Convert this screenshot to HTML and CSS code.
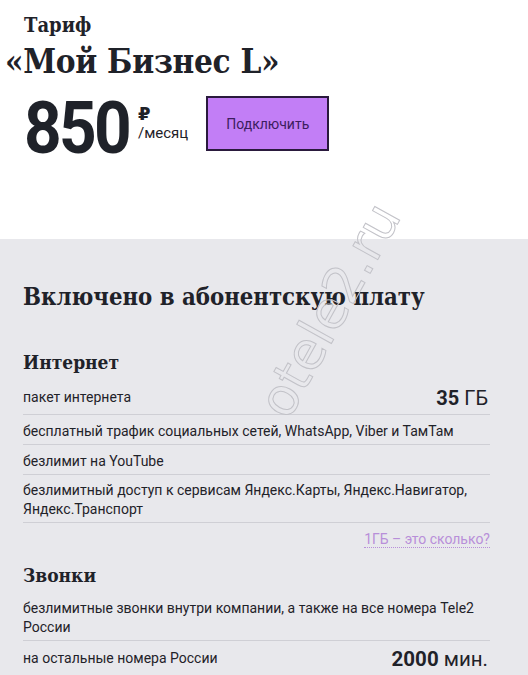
FILE: index.html
```html
<!DOCTYPE html>
<html lang="ru">
<head>
<meta charset="utf-8">
<title>Тариф «Мой Бизнес L»</title>
<link rel="stylesheet" href="styles.css">
</head>
<body>
<div class="page">
  <header class="top">
    <div class="label">Тариф</div>
    <h1 class="title">«Мой Бизнес L»</h1>
    <div class="price-row">
      <div class="price">850</div>
      <div class="unit">
        <span class="rub">₽</span>
        <span class="per">/месяц</span>
      </div>
      <button class="btn">Подключить</button>
    </div>
  </header>

  <main class="included">
    <h2 class="inc-title">Включено в абонентскую плату</h2>

    <h3 class="group">Интернет</h3>
    <ul class="rows">
      <li class="row has-val"><span class="txt">пакет интернета</span><span class="val"><b>35</b> ГБ</span></li>
      <li class="row"><span class="txt">бесплатный трафик социальных сетей, WhatsApp, Viber и ТамТам</span></li>
      <li class="row"><span class="txt">безлимит на YouTube</span></li>
      <li class="row"><span class="txt">безлимитный доступ к сервисам Яндекс.Карты, Яндекс.Навигатор, Яндекс.Транспорт</span></li>
    </ul>
    <div class="hint"><a class="hint-link">1ГБ – это сколько?</a></div>

    <h3 class="group group-calls">Звонки</h3>
    <ul class="rows">
      <li class="row"><span class="txt">безлимитные звонки внутри компании, а также на все номера Tele2 России</span></li>
      <li class="row has-val"><span class="txt">на остальные номера России</span><span class="val big"><b>2000</b> мин.</span></li>
    </ul>
  </main>

  <div class="watermark">otele2.ru</div>
</div>
</body>
</html>
```

FILE: styles.css
```css
* { box-sizing: border-box; }
html, body { margin: 0; padding: 0; }
body {
  width: 528px;
  height: 675px;
  overflow: hidden;
  background: #ffffff;
  color: #1f2229;
  font-family: Roboto, "Noto Sans", sans-serif;
}
.page { position: relative; width: 528px; height: 675px; overflow: hidden; }

.top {
  padding: 13px 24px 0 24px;
  height: 239px;
  background: #ffffff;
}
.label {
  font-family: "DejaVu Serif Condensed", "DejaVu Serif", serif;
  font-weight: bold;
  font-size: 20px;
  line-height: 24px;
}
.title {
  margin: 5px 0 0 -19px;
  font-family: "DejaVu Serif Condensed", "DejaVu Serif", serif;
  font-weight: bold;
  font-size: 33px;
  line-height: 40px;
  letter-spacing: -0.3px;
}
.price-row {
  display: flex;
  align-items: flex-start;
  margin-top: 14px;
}
.price {
  font-family: Roboto, sans-serif;
  font-weight: 700;
  font-size: 73px;
  line-height: 64px;
  letter-spacing: -3px;
  transform: scaleX(0.9);
  transform-origin: left center;
  width: 108px;
}
.unit {
  display: flex;
  flex-direction: column;
  margin-left: 6px;
  padding-top: 8px;
}
.rub {
  font-family: "DejaVu Sans", sans-serif;
  font-weight: bold;
  font-size: 18px;
  line-height: 20px;
}
.per {
  font-size: 15px;
  line-height: 18px;
}
.btn {
  margin: 0 0 0 18px;
  width: 123px;
  height: 55px;
  border: 2px solid #2a1a3d;
  background: #c27ef6;
  color: #3c1d5e;
  font-family: Roboto, sans-serif;
  font-size: 14px;
  padding: 0;
}

.included {
  background: #e8e8ec;
  height: 436px;
  padding: 43px 38px 0 23px;
}
.inc-title {
  margin: 0;
  font-family: "DejaVu Serif Condensed", "DejaVu Serif", serif;
  font-weight: bold;
  font-size: 23.7px;
  line-height: 30px;
}
.group {
  margin: 38px 0 0 0;
  font-family: "DejaVu Serif Condensed", "DejaVu Serif", serif;
  font-weight: bold;
  font-size: 19px;
  line-height: 24px;
}
.rows {
  list-style: none;
  margin: 6px 0 0 0;
  padding: 0;
}
.row {
  display: flex;
  justify-content: space-between;
  align-items: center;
  padding: 6px 0 3px 0;
  border-bottom: 1px solid #cfcfd5;
  font-size: 14px;
  line-height: 19px;
  min-height: 30px;
}
.row.has-val {
  min-height: 35px;
  padding: 4px 0 3px 0;
}
.txt { flex: 1 1 auto; }
.val {
  font-size: 20px;
  line-height: 22px;
  white-space: nowrap;
  padding-right: 2px;
}
.val b { font-weight: 700; }
.val.big { font-size: 20.5px; }
.hint {
  text-align: right;
  padding-top: 7px;
  font-size: 14px;
  line-height: 18px;
}
.hint-link {
  color: #b88fd9;
  border-bottom: 1px dotted #b88fd9;
}
.group-calls { margin-top: 15px; }

.watermark {
  position: absolute;
  left: 212px;
  top: 284px;
  font-family: "DejaVu Sans", sans-serif;
  font-size: 52px;
  line-height: 52px;
  color: transparent;
  -webkit-text-stroke: 1px #c2c2c8;
  transform: rotate(-61deg);
  transform-origin: center;
  white-space: nowrap;
  pointer-events: none;
}
```
